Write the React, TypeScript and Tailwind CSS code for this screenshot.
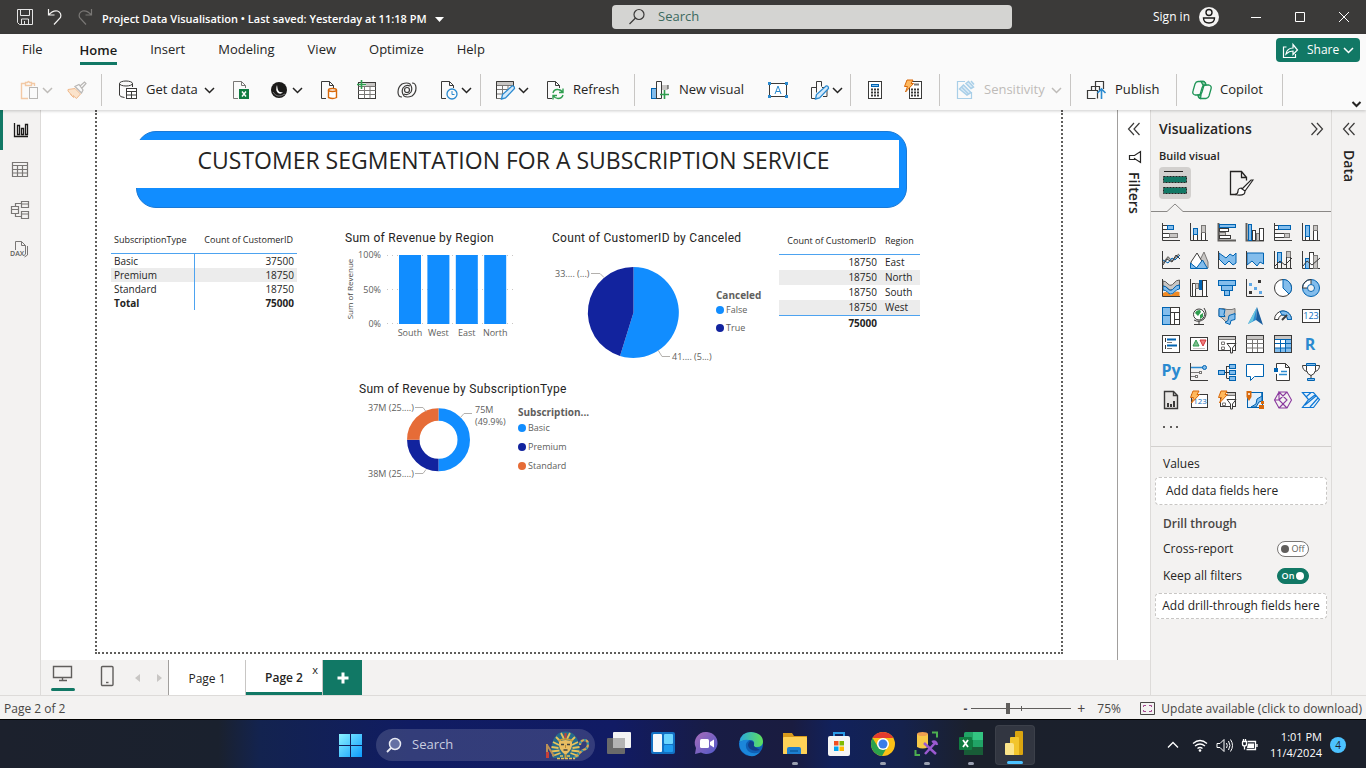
import type { ReactNode } from "react";

const INK = "#3b3a39";
const BLUE = "#83bdec";
const EDGE = "#0063b1";
const GREY = "#c8c6c4";
const MID = "#797775";

type BoxProps = { x: number; y: number; w: number; h: number; f?: string; s?: string };
const Box = ({ x, y, w, h, f = "#fff", s = INK }: BoxProps) => (
  <rect x={x} y={y} width={w} height={h} fill={f} stroke={s} />
);
const Line = ({ d, s = INK, w = 1, f = "none" }: { d: string; s?: string; w?: number; f?: string }) => (
  <path d={d} stroke={s} strokeWidth={w} fill={f} />
);
const Axis = () => <Line d="M.5 0V17.5H18" />;
const Bolt = () => <path d="M3 0h6L7 3.500h2.500L1.500 12 3.500 6.500H.5z" fill="#ffb95e" stroke="#d8690b" />;

function Glyph({ size = 20, box = size, children }: { size?: number; box?: number; children: ReactNode }) {
  return (
    <svg width={size} height={size} viewBox={`0 0 ${box} ${box}`} fill="none" aria-hidden="true" className="shrink-0 overflow-visible">
      {children}
    </svg>
  );
}

function Chevron({ tone = "#252423" }: { tone?: string }) {
  return (
    <svg width="11" height="7" viewBox="0 0 11 7" fill="none" aria-hidden="true" className="shrink-0">
      <path d="M1 1l4.500 4.500L10 1" stroke={tone} strokeWidth="1.500" />
    </svg>
  );
}

const Doc = ({ s = INK }: { s?: string }) => <path d="M7 18.500H2.500v-17h8l4 4V8M10.500 1.500v4h4" fill="none" stroke={s} />;

const tool = {
  paste: (
    <>
      <path d="M8 18.500H1.500v-15h4M11 3.500h3.500V6M5.500 5.500v-3h2q1-2 2 0h2v3z" stroke="#f3c9a5" strokeWidth="1.400" />
      <Box x={9.5} y={7.5} w={8} h={11} f="#fafafa" s="#b8b6b4" />
    </>
  ),
  brush: (
    <>
      <path d="M1 9.500l7-1 5.500 5.500-4 4.500-3.500-3 .5 2-3-3 1 .5-3.500-4z" fill="#fbe3cb" stroke="#f0b98c" />
      <path d="M8 6.500l6.500 6.500 1.500-3-4-5.500zM13 6l4.500-4 1.500 1.500L15 8" fill="#fafafa" stroke="#b8b6b4" strokeWidth="1.200" />
    </>
  ),
  getData: (
    <>
      <ellipse cx="8" cy="3.500" rx="6.500" ry="2.500" stroke={INK} />
      <path d="M1.500 3.500V15q0 2 5 2.500M14.500 3.500V7" stroke={INK} />
      <Box x={8.5} y={8.5} w={10} h={10} />
      <path d="M8.500 11.500h10M8.500 15h10M13.500 11.500v7" stroke={INK} />
    </>
  ),
  excel: (
    <>
      <Doc s={MID} />
      <rect x="8" y="9" width="10" height="10" fill="#107c41" />
      <path d="M11 11.500l4 5m0-5l-4 5" stroke="#fff" strokeWidth="1.400" />
    </>
  ),
  lake: (
    <>
      <circle cx="9" cy="10" r="8" fill="#1b1a19" />
      <path d="M7 5q-2 5 1 8 3 2 5-1-4 1-5-2-.6-2-1-5z" fill="#fff" />
      <path d="M3 12q4 7 12 2" stroke="#777" />
    </>
  ),
  sql: (
    <>
      <Doc />
      <path d="M9.500 10v7.500q4.500 2 8 0V10" fill="#fff" stroke="#d8690b" strokeWidth="1.400" />
      <ellipse cx="13.500" cy="10" rx="4" ry="1.500" fill="#fff" stroke="#d8690b" strokeWidth="1.400" />
    </>
  ),
  table: (
    <>
      <Box x={1.5} y={2.5} w={17} h={16} />
      <rect x="9" y="3" width="9" height="3" fill={GREY} />
      <path d="M1.500 6.500h17M1.500 10.500h17M1.500 14.500h17M7.500 6v12.500M13 6v12.500" stroke={MID} />
      <path d="M4.500 0v9M0 4.500h9" stroke="#2f9e4f" strokeWidth="1.600" />
    </>
  ),
  dataverse: (
    <g stroke={INK} strokeWidth="1.200">
      <circle cx="10" cy="10" r="2.500" />
      <path d="M15 3q4 0 4 5 0 5-4 8-5 2-8 0-3-4-1-8 3-4 7-2M5 17q-4 0-4-5 0-5 4-8 5-2 8 0 3 4 1 8-3 4-7 2" />
    </g>
  ),
  recent: (
    <>
      <Doc />
      <circle cx="13" cy="14" r="5" fill="#fafafa" stroke="#2a8ad0" strokeWidth="1.300" />
      <path d="M13 11v3.500h2.500" stroke="#2a8ad0" />
    </>
  ),
  transform: (
    <>
      <path d="M7 18.500H.5v-17h17V8M.5 5.500h17M.5 9.500h12M.5 14h8M6.500 5v10M12 5v6" stroke={MID} />
      <rect x="1" y="2" width="16" height="3" fill={GREY} />
      <path d="M.5 18.500v-17h17V8" stroke={INK} />
      <path d="M5.500 19l1-4.500L16 6q2.500-.5 2.500 2.500L9.500 18z" fill="#d5eafb" stroke="#2a8ad0" strokeWidth="1.300" />
    </>
  ),
  refresh: (
    <>
      <Doc />
      <rect x="7" y="9" width="12" height="10" fill="#fafafa" />
      <path d="M8 13q1-4 5-3.500 3 .2 4.500 2.500m.5-3.500V12.500h-4M18 15q-1 3.500-5 3.500-3 0-4.500-2.500M8 19.500v-4h4" stroke="#2f9e4f" strokeWidth="1.400" />
    </>
  ),
  visual: (
    <>
      <Box x={0.5} y={8.5} w={5} h={10} f={BLUE} s={EDGE} />
      <rect x="11" y="5" width="6" height="5" fill={GREY} />
      <path d="M5.500 18.500v-17h5v17zM17 5v4" stroke={INK} />
      <path d="M13.500 10v9M9 14.500h9" stroke="#2f9e4f" strokeWidth="1.600" />
    </>
  ),
  textBox: (
    <>
      <rect x="1.500" y="3.500" width="17" height="13" fill="#fff" stroke={INK} />
      <path d="M7 14l3-8 3 8M8 11.500h4" stroke="#2a8ad0" />
      <path d="M0 2h3v3H0zM17 2h3v3h-3zM0 15h3v3H0zM17 15h3v3h-3z" fill="#2a8ad0" />
    </>
  ),
  shapes: (
    <>
      <path d="M5.500 18.500H1.500v-11h5v5M6.500 12V1.500h5v5M12 7.500h5v9h-4" stroke={INK} />
      <path d="M5.500 19l1-4.500L16 6q2.500-.5 2.500 2.500L9.500 18z" fill="#d5eafb" stroke="#2a8ad0" strokeWidth="1.300" />
    </>
  ),
  calc: (
    <>
      <rect x="2.500" y="1.500" width="13" height="17" fill="#fff" stroke={INK} />
      <rect x="5.500" y="4.500" width="7" height="2" fill={BLUE} stroke={EDGE} />
      <path d="M5 9.500h8M5 12.500h8M5 15.500h8" stroke={INK} strokeWidth="2" strokeDasharray="2 1" />
    </>
  ),
  quick: (
    <>
      <rect x="5.500" y="1.500" width="12" height="17" fill="#fff" stroke={INK} />
      <path d="M10 4.500h5" stroke={MID} strokeWidth="2" />
      <path d="M7 9.500h8M7 12.500h8M7 15.500h8" stroke={INK} strokeWidth="2" strokeDasharray="2 1" />
      <Bolt />
    </>
  ),
  sensitivity: (
    <g stroke="#a9cfe8">
      <path d="M9 1.500H1.500v17h14V12" strokeWidth="1.200" />
      <path d="M3.500 9l4-4 7.500 7.500-4 2.500zM10 3.500l5 5 2.500-1.500-5-5.500zM15 1l3 3.500M5.500 7l7 7" strokeWidth="1.500" fill="#dcecf7" />
    </g>
  ),
  publish: (
    <>
      <path d="M8.500 18.500H.5v-8h4v-4h4M4.500 10.500h6v8M8.500 10v-8.500h8V9M8.500 6.500h4V10" stroke={INK} strokeWidth="1.200" />
      <path d="M14.500 19V9.500M10.500 13l4-4 4 4" stroke="#2a8ad0" strokeWidth="1.600" />
    </>
  ),
  copilot: (
    <g stroke="#1f9457" strokeWidth="1.300">
      <path d="M6 1.500h5q2 0 1.500 2L10 12q-1 3-3 3H3q-3-1-2-4l2-7q1-2.500 3-2.500z" />
      <path d="M14 18.500H9q-2 0-1.500-2L10 8q1-3 3-3h4q3 1 2 4l-2 7q-1 2.500-3 2.500z" />
      <path d="M9 1.500h3q2 1 2 3.500h-3zM6 15h3l-.5 3.500Q6 18 6 15z" fill="#8ccfa9" />
    </g>
  ),
};

type ToolProps = { icon: ReactNode; name: string; label?: string; arrow?: boolean; dim?: boolean; className?: string };
function Tool({ icon, name, label, arrow, dim, className = "" }: ToolProps) {
  return (
    <button aria-label={name} className={`flex h-9 items-center ${className} ${dim ? "text-[#bebbb8]" : ""}`}>
      <Glyph>{icon}</Glyph>
      {label && <span className="ml-2 mr-1 whitespace-nowrap">{label}</span>}
      {arrow && (
        <span className="ml-0.5">
          <Chevron tone={dim ? "#bebbb8" : undefined} />
        </span>
      )}
    </button>
  );
}

function Group({ className, children }: { className: string; children: ReactNode }) {
  return (
    <div className={`flex h-8 shrink-0 items-center border-r border-[#c8c6c4] ${className}`}>{children}</div>
  );
}

function TitleBar() {
  return (
    <header className="flex h-[34px] shrink-0 items-center bg-[#3b3a39] text-xs text-white">
      <div className="flex flex-[612] items-center">
        <button aria-label="Save" className="ml-4">
          <Glyph size={18}>
            <path d="M1.500 1.500h15v15h-13l-2-2zM4.500 2v5.500h9V2M5.500 16v-5h7v5M8.500 13v3" stroke="#e5e5e5" />
          </Glyph>
        </button>
        <button aria-label="Undo" className="ml-3">
          <Glyph size={18}>
            <path d="M2.500 1v6h6M2.500 7Q7 2 11.500 3q4.500 2 3 6.500L8 16.500" stroke="#f3f2f1" strokeWidth="1.200" />
          </Glyph>
        </button>
        <button aria-label="Redo" className="ml-3">
          <Glyph size={18}>
            <path d="M15.500 1v6h-6M15.500 7Q11 2 6.500 3 2 5 3.500 9.500l6.500 7" stroke="#797775" strokeWidth="1.200" />
          </Glyph>
        </button>
        <button className="ml-2 flex items-center gap-2 whitespace-nowrap pt-1 text-[11px] font-semibold">
          Project Data Visualisation • Last saved: Yesterday at 11:18 PM
          <svg width="9" height="5" viewBox="0 0 9 5" aria-hidden="true">
            <path d="M0 0h9L4.500 5z" fill="#fff" />
          </svg>
        </button>
      </div>
      <label className="flex h-6 w-[400px] items-center gap-3 rounded-sm bg-[#d4d4d2] pl-4">
        <Glyph size={18}>
          <circle cx="11" cy="6.500" r="5" stroke="#3b3a39" strokeWidth="1.200" />
          <path d="M7.500 10L1.500 16" stroke="#3b3a39" strokeWidth="1.200" />
        </Glyph>
        <input
          type="search"
          aria-label="Search"
          placeholder="Search"
          className="min-w-0 flex-1 bg-transparent text-[13px] outline-none placeholder:text-[#3c6a5f]"
        />
      </label>
      <div className="flex flex-[354] items-center justify-end">
        <button className="flex items-center gap-2">
          Sign in
          <Glyph size={22}>
            <circle cx="11" cy="11" r="10" fill="#f3f2f1" />
            <circle cx="11" cy="6.500" r="3" stroke="#1b1a19" strokeWidth="1.400" />
            <path d="M5.500 12h11q0 5-5.500 5t-5.500-5z" stroke="#1b1a19" strokeWidth="1.400" />
          </Glyph>
        </button>
        <button aria-label="Minimize" className="flex w-[42px] justify-end">
          <Glyph size={12}><path d="M1 6.500h10" stroke="#fff" /></Glyph>
        </button>
        <button aria-label="Maximize" className="flex w-11 justify-end">
          <Glyph size={12}><path d="M1.500 1.500h9v9h-9z" stroke="#fff" /></Glyph>
        </button>
        <button aria-label="Close" className="mr-4 flex w-11 justify-end">
          <Glyph size={12}><path d="M1 1l10 10M11 1L1 11" stroke="#fff" /></Glyph>
        </button>
      </div>
    </header>
  );
}

function Ribbon() {
  const menu = ["Insert", "Modeling", "View", "Optimize", "Help"];
  return (
    <div className="z-10 shrink-0 bg-[#fafafa] text-[13px] text-[#252423] shadow-[0_1px_3px_rgba(0,0,0,0.2)]">
      <nav className="flex h-8 items-center gap-[33px] pl-[22px] pr-1.5">
        <a href="#file" className="mr-1">File</a>
        <a href="#home" className="flex h-8 flex-col justify-end pb-px font-semibold text-[#1b1a19]">
          Home
          <span className="mt-0.5 h-[3px] bg-[#117865]" />
        </a>
        {menu.map((m) => (
          <a key={m} href={`#${m.toLowerCase()}`}>{m}</a>
        ))}
        <button className="ml-auto flex h-6 w-[84px] items-center gap-2 rounded bg-[#117865] pl-1.5 text-xs text-white">
          <Glyph size={17}>
            <path d="M4.500 5H1.500v10.500h12V12M4 12q1-6 7-6V2.500L15.500 8 11 12.500V9Q7 9 4 12z" stroke="#fff" strokeWidth="1.200" />
          </Glyph>
          <span className="flex items-center gap-1">Share <Chevron tone="#fff" /></span>
        </button>
      </nav>
      <div className="flex h-11 items-center pt-1">
        <Group className="w-[102px] pl-5">
          <Tool icon={tool.paste} name="Paste" arrow dim className="w-[47px]" />
          <Tool icon={tool.brush} name="Format painter" dim />
        </Group>
        <Group className="w-[379px] pl-4">
          <Tool icon={tool.getData} name="Get data" label="Get data" arrow className="w-[113px]" />
          <Tool icon={tool.excel} name="Excel workbook" className="w-[39px]" />
          <Tool icon={tool.lake} name="OneLake data hub" arrow className="w-[49px]" />
          <Tool icon={tool.sql} name="SQL Server" className="w-[38px]" />
          <Tool icon={tool.table} name="Enter data" className="w-10" />
          <Tool icon={tool.dataverse} name="Dataverse" className="w-[42px]" />
          <Tool icon={tool.recent} name="Recent sources" arrow />
        </Group>
        <Group className="w-[154px] pl-[15px]">
          <Tool icon={tool.transform} name="Transform data" arrow className="w-[49px]" />
          <Tool icon={tool.refresh} name="Refresh" label="Refresh" />
        </Group>
        <Group className="w-[216px] pl-4">
          <Tool icon={tool.visual} name="New visual" label="New visual" className="w-[117px]" />
          <Tool icon={tool.textBox} name="Text box" className="w-[42px]" />
          <Tool icon={tool.shapes} name="Shapes" arrow />
        </Group>
        <Group className="w-[89px] pl-[15px]">
          <Tool icon={tool.calc} name="New measure" className="w-[38px]" />
          <Tool icon={tool.quick} name="Quick measure" />
        </Group>
        <Group className="w-[131px] pl-4">
          <Tool icon={tool.sensitivity} name="Sensitivity" label="Sensitivity" arrow dim />
        </Group>
        <Group className="w-[106px] pl-4">
          <Tool icon={tool.publish} name="Publish" label="Publish" />
        </Group>
        <Group className="w-[106px] pl-[15px]">
          <Tool icon={tool.copilot} name="Copilot" label="Copilot" />
        </Group>
        <button aria-label="Collapse ribbon" className="ml-auto mr-1 self-end pb-0.5">
          <svg width="11" height="7" viewBox="0 0 11 7" fill="none" aria-hidden="true">
            <path d="M1.500 1l4 4 4-4" stroke="#252423" strokeWidth="2" />
          </svg>
        </button>
      </div>
    </div>
  );
}

function Rail() {
  return (
    <nav className="flex w-[41px] shrink-0 flex-col border-r border-[#dddbd9] bg-[#f3f2f1]">
      <button aria-label="Report view" className="flex h-10 items-center border-l-[3px] border-[#117865] pl-2.5">
        <Glyph size={16}>
          <path d="M1.500 1v13.500H15M4.500 12.500v-9h2v9zM8.500 12.500v-6h2v6zM12.500 12.500v-10h2v10z" stroke="#1b1a19" strokeWidth="1.300" />
        </Glyph>
      </button>
      <button aria-label="Table view" className="flex h-10 items-center justify-center">
        <Glyph size={18}>
          <path d="M1.500 1.500h15v14h-15zM1.500 4.500h15M1.500 8.500h15M1.500 12h15M6.500 4v11M11.500 4v11" stroke={MID} strokeWidth="1.200" />
        </Glyph>
      </button>
      <button aria-label="Model view" className="flex h-10 items-center justify-center">
        <Glyph>
          <path d="M1.500 6.500h7v7h-7zM1.500 9.500h7M11.500 1.500h7v6h-7zM11.500 4h7M11.500 11.500h7v7h-7zM11.500 14h7M5.500 6.500v-3h6M5.500 13.500v3h6" stroke={MID} strokeWidth="1.200" />
        </Glyph>
      </button>
      <button aria-label="DAX query view" className="flex h-10 items-center justify-center">
        <Glyph>
          <path d="M5.500 10V1.500h6l4 4V14l-2 2M11.500 1.500v4h4M17.500 6v9l-3 2" stroke={MID} />
          <text x="0" y="16" fontSize="7" className="fill-[#605e5c] font-semibold">DAX</text>
        </Glyph>
      </button>
    </nav>
  );
}

function CountTable() {
  const rows = [["Basic", "37500"], ["Premium", "18750"], ["Standard", "18750"]];
  return (
    <table className="absolute left-[14px] top-[118px] w-[186px] table-fixed border-collapse text-[10px] leading-[14px] text-[#252423]">
      <thead className="text-[9px]">
        <tr className="h-[25px] border-b border-[#4da3f0]">
          <th className="w-[83px] whitespace-nowrap p-0 pl-[3px] text-left font-normal">SubscriptionType</th>
          <th className="whitespace-nowrap p-0 pr-1 text-right font-normal">Count of CustomerID</th>
        </tr>
      </thead>
      <tbody>
        {rows.map(([k, v], i) => (
          <tr key={k} className={i === 1 ? "bg-[#ececec]" : ""}>
            <td className="border-r border-[#4da3f0] p-0 pl-[3px]">{k}</td>
            <td className="p-0 pr-[3px] text-right">{v}</td>
          </tr>
        ))}
      </tbody>
      <tfoot className="font-bold">
        <tr>
          <td className="border-r border-[#4da3f0] p-0 pl-[3px]">Total</td>
          <td className="p-0 pr-[3px] text-right">75000</td>
        </tr>
      </tfoot>
    </table>
  );
}

function RegionTable() {
  const rows = ["East", "North", "South", "West"];
  return (
    <table className="absolute left-[682px] top-[118px] w-[141px] table-fixed border-collapse text-[10px] leading-[15px] text-[#252423]">
      <thead className="text-[9px]">
        <tr className="h-[26px] border-b border-[#4da3f0]">
          <th className="w-[100px] whitespace-nowrap p-0 pr-[3px] text-right font-normal">Count of CustomerID</th>
          <th className="p-0 pl-1.5 text-left font-normal">Region</th>
        </tr>
      </thead>
      <tbody>
        {rows.map((r, i) => (
          <tr key={r} className={i % 2 ? "bg-[#ececec]" : ""}>
            <td className="p-0 pr-0.5 text-right">18750</td>
            <td className="p-0 pl-1.5">{r}</td>
          </tr>
        ))}
      </tbody>
      <tfoot className="border-t border-[#4da3f0] font-bold">
        <tr>
          <td className="p-0 pr-0.5 text-right">75000</td>
          <td />
        </tr>
      </tfoot>
    </table>
  );
}

const visualTitle = "whitespace-nowrap font-['Roboto',sans-serif] text-xs leading-4 tracking-wide text-[#252423]";

function RevenueByRegion() {
  const bars = ["South", "West", "East", "North"];
  return (
    <section className="absolute left-[248px] top-[120px]">
      <h2 className={visualTitle}>Sum of Revenue by Region</h2>
      <svg width="176" height="96" viewBox="0 0 176 96" className="overflow-visible fill-[#605e5c] text-[9px]">
        {["100%", "50%", "0%"].map((t, i) => (
          <g key={t}>
            <text x="36" y={12 + i * 34.5} textAnchor="end">{t}</text>
            <path d={`M42 ${9.5 + i * 34}H172`} stroke="#c8c6c4" strokeDasharray="1 4" />
          </g>
        ))}
        {bars.map((b, i) => (
          <g key={b}>
            <rect x={54 + i * 28.4} y="9" width="22" height="69" fill="#118dff" />
            <text x={65 + i * 28.4} y="90" textAnchor="middle">{b}</text>
          </g>
        ))}
        <text x="8" y="43" textAnchor="middle" transform="rotate(-90 8 43)" className="fill-[#484644] text-[8px]">Sum of Revenue</text>
      </svg>
    </section>
  );
}

type LegendProps = { title: string; items: [string, string][]; className: string };
function Legend({ title, items, className }: LegendProps) {
  return (
    <div className={`absolute text-[#605e5c] ${className}`}>
      <p className="text-[10px] font-bold leading-3">{title}</p>
      <ul className="flex flex-col text-[9px]">
        {items.map(([name, color]) => (
          <li key={name} className="flex items-center gap-0.5">
            <svg width="8" height="8" viewBox="0 0 8 8" aria-hidden="true"><circle cx="4" cy="4" r="4" fill={color} /></svg>
            {name}
          </li>
        ))}
      </ul>
    </div>
  );
}

function CanceledPie() {
  return (
    <section className="absolute left-[455px] top-[120px]">
      <h2 className={visualTitle}>Count of CustomerID by Canceled</h2>
      <svg width="162" height="120" viewBox="0 0 162 120" className="fill-[#605e5c] text-[9px]">
        <path d="M81.500 66.500V21A45.500 45.500 0 1 1 68 110z" fill="#118dff" />
        <path d="M81.500 66.500L68 110A45.500 45.500 0 0 1 81.500 21z" fill="#12239e" />
        <path d="M39 27.500h9l4 4M106 104l4 6.500h8" fill="none" stroke="#b3b0ad" />
        <text x="3" y="31">33.... (...)</text>
        <text x="120" y="114">41.... (5...)</text>
      </svg>
      <Legend title="Canceled" className="left-[164px] top-[59px] leading-[18px]" items={[["False", "#118dff"], ["True", "#12239e"]]} />
    </section>
  );
}

function TypeDonut() {
  return (
    <section className="absolute left-[262px] top-[271px]">
      <h2 className={visualTitle}>Sum of Revenue by SubscriptionType</h2>
      <svg width="150" height="90" viewBox="0 0 150 90" className="fill-[#605e5c] text-[9px]">
        <g fill="none" strokeWidth="12.500">
          <path d="M79.500 17.500a25.200 25.200 0 0 1 0 50.500" stroke="#118dff" />
          <path d="M79.500 68a25.200 25.200 0 0 1-25.200-25.200" stroke="#12239e" />
          <path d="M54.300 42.800a25.200 25.200 0 0 1 25.200-25.300" stroke="#e66c37" />
        </g>
        <path d="M56 10.500h8l3 4M56 76.500h8l3-4M101 21l4-4.500h8" fill="none" stroke="#b3b0ad" />
        <text x="9" y="14">37M (25....)</text>
        <text x="9" y="80">38M (25....)</text>
        <text x="116" y="16">75M</text>
        <text x="116" y="28">(49.9%)</text>
      </svg>
      <Legend
        title="Subscription..."
        className="left-[159px] top-[25px] leading-[19px]"
        items={[["Basic", "#118dff"], ["Premium", "#12239e"], ["Standard", "#e66c37"]]}
      />
    </section>
  );
}

function Report() {
  return (
    <main className="min-w-0 flex-1 overflow-hidden bg-white">
      <div className="relative ml-[54px] h-[544px] w-[968px] border-2 border-t-0 border-dotted border-[#605e5c]">
        <div className="absolute left-[39px] top-[21px] h-[77px] w-[771px] rounded-[20px] border border-[#1a79d6] bg-[#118dff]" />
        <h1 className="absolute left-[39px] top-[30px] flex h-12 w-[763px] items-center justify-center whitespace-nowrap bg-white pb-2 pr-2 text-[23px] text-[#252423]">
          CUSTOMER SEGMENTATION FOR A SUBSCRIPTION SERVICE
        </h1>
        <CountTable />
        <RevenueByRegion />
        <CanceledPie />
        <RegionTable />
        <TypeDonut />
      </div>
    </main>
  );
}

const visuals: [string, ReactNode][] = [
  ["Stacked bar chart", <><Axis /><Box x={0.5} y={2.5} w={5} h={4} /><Box x={5.5} y={2.5} w={6} h={4} f={BLUE} s={EDGE} /><Box x={0.5} y={10.5} w={7} h={4} /><Box x={7.5} y={10.5} w={8} h={4} f={GREY} s={MID} /></>],
  ["Stacked column chart", <><Axis /><Box x={3.5} y={11.5} w={4} h={6} /><Box x={3.5} y={5.5} w={4} h={6} f={BLUE} s={EDGE} /><Box x={11.5} y={9.5} w={4} h={8} /><Box x={11.5} y={2.5} w={4} h={7} f={GREY} s={MID} /></>],
  ["Clustered bar chart", <><Line d="M.5 0V17.500H18" w={2} s="#605e5c" /><Box x={1.5} y={1.5} w={16} h={3} f={BLUE} s={EDGE} /><Box x={1.5} y={5.5} w={9} h={3} /><Box x={1.5} y={9.5} w={6} h={3} f={GREY} s={MID} /><Box x={1.5} y={12.5} w={11} h={3} /></>],
  ["Clustered column chart", <><Line d="M.5 0V17.500H18" w={2} s="#605e5c" /><Box x={2.5} y={1.5} w={3} h={16} f={BLUE} s={EDGE} /><Box x={6.5} y={7.5} w={3} h={10} /><Box x={10.5} y={10.5} w={3} h={7} f={GREY} s={MID} /><Box x={13.5} y={5.5} w={4} h={12} /></>],
  ["100% stacked bar chart", <><Axis /><Box x={0.5} y={2.5} w={4} h={4} /><Box x={4.5} y={2.5} w={12} h={4} f={BLUE} s={EDGE} /><Box x={0.5} y={10.5} w={10} h={4} /><Box x={10.5} y={10.5} w={5} h={4} f={GREY} s={MID} /></>],
  ["100% stacked column chart", <><Axis /><Box x={3.5} y={13.5} w={4} h={4} /><Box x={3.5} y={2.5} w={4} h={11} f={BLUE} s={EDGE} /><Box x={11.5} y={7.5} w={4} h={10} /><Box x={11.5} y={2.5} w={4} h={5} f={GREY} s={MID} /></>],
  ["Line chart", <><Axis /><Line d="M1 12l5-6 4 4 7-7" s={MID} w={1.3} /><Line d="M1 9l5 3 4-5 3 2 5-5" s={EDGE} /><Line d="M1 14l4-6 5 3 4-7 4 4" /></>],
  ["Area chart", <><path d="M14 1l4 10v6H6z" fill={GREY} stroke={MID} /><path d="M1 11l6-9 6 10-5 5H1z" fill="#fff" stroke={INK} /><path d="M.5 12l6 5 6-8 5 8.500H.5z" fill={BLUE} stroke={EDGE} /></>],
  ["Stacked area chart", <><path d="M1 8l6 6 4-4 4 4 3-2V2l-3 3-3-2-4 4-7-5z" fill={BLUE} stroke={EDGE} /><Axis /></>],
  ["100% stacked area chart", <><path d="M1 2h16.500v11L14 11l-3 4-5-5-5 4z" fill={BLUE} stroke={EDGE} /><Axis /></>],
  ["Line and stacked column chart", <><Axis /><Box x={3.5} y={1.5} w={4} h={10} f={BLUE} s={EDGE} /><Box x={12.5} y={0.5} w={4} h={6} f={GREY} s={MID} /><Line d="M3.500 11v6M7.500 11v6M12.500 6v11M16.500 6v11M1 15l5-5 5 4 7-7" /></>],
  ["Line and clustered column chart", <><Axis /><Box x={3.5} y={7.5} w={4} h={10} f={BLUE} s={EDGE} /><Box x={7.5} y={1.5} w={4} h={16} /><Box x={11.5} y={4.5} w={4} h={13} f={GREY} s={MID} /><Line d="M1 15l4-5 5 4 8-7" /></>],
  ["Ribbon chart", <><path d="M1 14q4-3 8 2 4-5 8.500-3v4H1z" fill="#f08a24" /><path d="M1 2q3 0 5 3 3 3 6-1 2-3 5.500-3v5q-3 0-5 3-4 4-7 0-2-2-4.500-2z" fill={GREY} stroke="#605e5c" /><path d="M1 7q3 0 5 3 3 3 6-1 2-3 5.500-3v4q-3 0-5 3-4 4-7 0-2-2-4.500-2z" fill={BLUE} stroke={EDGE} /><Axis /></>],
  ["Waterfall chart", <><Axis /><Box x={2.5} y={4.5} w={3} h={13} /><Box x={5.5} y={4.5} w={3} h={5} f={GREY} s={MID} /><Box x={9.5} y={1.5} w={2} h={9} f={EDGE} s={EDGE} /><Box x={12.5} y={1.5} w={4} h={16} /></>],
  ["Funnel chart", <><Box x={0.5} y={1.5} w={17} h={5} f={BLUE} s={EDGE} /><Box x={3.5} y={6.5} w={11} h={5} f={BLUE} s={EDGE} /><Box x={6.5} y={11.5} w={5} h={5} f={BLUE} s={EDGE} /></>],
  ["Scatter chart", <><Axis /><path d="M12 1h3v3h-3zM3 12h3v3H3z" fill={INK} /><path d="M3 4h3v3H3zM8 8h3v3H8zM13 12h3v3h-3z" fill="#5fa8e6" /></>],
  ["Pie chart", <><circle cx="9" cy="9" r="8.500" fill="#fff" stroke={INK} /><path d="M9 .5A8.500 8.500 0 0 1 15 15L9 9z" fill={BLUE} stroke={EDGE} /></>],
  ["Donut chart", <><circle cx="9" cy="9" r="6" stroke={BLUE} strokeWidth="5" /><path d="M3 9A6 6 0 0 1 9 3" stroke="#fff" strokeWidth="5" /><circle cx="9" cy="9" r="8.500" stroke={EDGE} /><circle cx="9" cy="9" r="3.500" stroke={EDGE} fill="#f3f2f1" /><path d="M.5 9H5M9 .5V5M.5 9A8.500 8.500 0 0 1 9 .5" stroke={INK} /></>],
  ["Treemap", <><Box x={0.5} y={0.5} w={8} h={8} f={BLUE} s={EDGE} /><Box x={0.5} y={8.5} w={8} h={9} f={BLUE} s={EDGE} /><Box x={8.5} y={0.5} w={9} h={5} /><Box x={8.5} y={5.5} w={4} h={12} /><Box x={12.5} y={5.5} w={5} h={7} /><Box x={12.5} y={12.5} w={5} h={5} /></>],
  ["Map", <><circle cx="9" cy="7.500" r="5.500" fill="#fff" stroke={INK} /><path d="M5 6q1-3 5-3l1 2-3 4zM10 8l3-2v4l-3 2z" fill="#2f9e4f" /><path d="M14 1q4 6 0 11-5 4-10 1M9 14v3M4 17.500h10" stroke={INK} /></>],
  ["Filled map", <><path d="M1 2.500q4-2 8 0l5 0 3-1v6l-3 5-5 3.500-5-5-3-2z" fill={GREY} stroke={MID} /><path d="M1 1.500l6 1-1 5 1 2H1zM11 8.500l6-2v6l-4 1-1 4-5-2 3-2z" fill={BLUE} stroke={EDGE} /></>],
  ["Azure map", <><path d="M11 0L2 17l8-4z" fill="#2a8ad0" /><path d="M11 0l6 18-7-5z" fill="#1b5e9e" /><path d="M11 0L2 17l5-3z" fill="#6cc7de" /></>],
  ["Gauge", <><path d="M.5 12.500a8.500 8.500 0 0 1 17 0h-4a4.500 4.500 0 0 0-9 0z" fill="#fff" stroke={INK} /><path d="M6 4.500a8.500 8.500 0 0 1 11.500 8h-4A4.500 4.500 0 0 0 8 8z" fill={BLUE} stroke={EDGE} /><path d="M8 13l5-5" stroke={INK} strokeWidth="2" /></>],
  ["Card", <><Box x={0.5} y={2.5} w={17} h={13} /><text x="9" y="12" textAnchor="middle" fontSize="9" className="fill-[#0f6cbd]">123</text></>],
  ["Multi-row card", <><Box x={0.5} y={0.5} w={17} h={17} /><Line d="M3.500 3v4M3.500 10v4" /><Line d="M5 4.500h9M5 10.500h10" s={EDGE} w={2} /><Line d="M5 7.500h5M5 13.500h5" s={MID} /></>],
  ["KPI", <><Box x={0.5} y={2.5} w={17} h={13} /><path d="M3 11l3-6 3 6z" fill="#7fba8f" stroke="#2f9e4f" /><path d="M10 5h6l-3 6z" fill="#f08080" stroke="#d13438" /><Line d="M3 13.500h12" s={GREY} /></>],
  ["Slicer", <><Box x={0.5} y={1.5} w={17} h={14} /><rect x="1" y="2" width="16" height="2" fill={GREY} /><Line d="M.5 4.500h17M3.500 7h3v2.500h-3zM3.500 12h3v2.500h-3z" s={MID} /><path d="M9 8.500h9l-3.500 4.500v5h-2v-5z" fill="#fff" stroke={INK} /></>],
  ["Table", <><Box x={0.5} y={0.5} w={17} h={17} /><rect x="1" y="1" width="16" height="3" fill={GREY} /><Line d="M.5 4.500h17M.5 8.500h17M.5 13h17M6.500 4v13M11.500 4v13" s={MID} /></>],
  ["Matrix", <><Box x={0.5} y={0.5} w={17} h={17} /><rect x="1" y="1" width="16" height="3" fill={GREY} /><path d="M12 5h5v12H1v-4h11z" fill={BLUE} /><Line d="M.5 4.500h17M.5 8.500h17M.5 13h17M6.500 4v13M11.500 4v13" s={EDGE} /><Line d="M.5.5h17v17H.5z" /></>],
  ["R script visual", <text x="8" y="15" textAnchor="middle" fontSize="16" className="fill-[#2a8ad0] font-bold">R</text>],
  ["Python visual", <text x="9" y="13" textAnchor="middle" fontSize="16" className="fill-[#2a8ad0] font-bold">Py</text>],
  ["Key influencers", <><Line d="M1 9.500h9M1 13.500h4" s={MID} /><Axis /><Line d="M1 4.500h12" s="#2a8ad0" w={1.5} /><circle cx="14.500" cy="4.500" r="2" fill={BLUE} stroke={EDGE} /><Box x={9.5} y={8.5} w={2} h={2} s={MID} /><Box x={5.5} y={12.5} w={2} h={2} s={MID} /></>],
  ["Decomposition tree", <><Line d="M6 9.500h6M8.500 3v12M8.500 3.500h3M8.500 15.500h3" /><Box x={0.5} y={7.5} w={6} h={4} f={BLUE} s={EDGE} /><Box x={11.5} y={1.5} w={6} h={4} f={BLUE} s={EDGE} /><Box x={11.5} y={7.5} w={6} h={4} f={BLUE} s={EDGE} /><Box x={11.5} y={13.5} w={6} h={4} f={BLUE} s={EDGE} /></>],
  ["Q&A", <path d="M.5 1.500h17v12H8.500l-4 4v-4h-4z" fill="#fff" stroke={EDGE} />],
  ["Smart narrative", <><path d="M2.500 5V.5h9l4 4v13h-13V11M11.500.5v4h4" fill="#fff" stroke={INK} /><Box x={0.5} y={5.5} w={3} h={3} f={EDGE} s={EDGE} /><Line d="M7 8.500h6M5 11.500h8" s="#2a8ad0" w={1.4} /></>],
  ["Metrics", <><path d="M4.500 1.500h9v6q-1 4-4.500 5-3.500-1-4.500-5zM4.500 2.500h-4q0 5 4.500 6M13.500 2.500h4q0 5-4.500 6M9 12v3" fill="#fff" stroke={INK} /><path d="M4.500.5h9v2h-9zM5.500 15.500h7v2h-7z" fill={BLUE} stroke={EDGE} /></>],
  ["Paginated report", <><path d="M2.500.5h9l4 4v13h-13zM11.500.5v4h4" fill="#e8e6e4" stroke={INK} strokeWidth="1.400" /><path d="M5 12h2v4H5zM8 13h2v3H8zM11 10h2v6h-2z" fill={INK} /></>],
  ["New card", <><Box x={1.5} y={3.5} w={16} h={13} /><text x="10" y="13" textAnchor="middle" fontSize="8" className="fill-[#0f6cbd]">123</text><Bolt /></>],
  ["New slicer", <><Box x={2.5} y={1.5} w={15} h={14} /><rect x="9" y="2" width="8" height="2" fill={GREY} /><Line d="M8 4.500h9M4.500 12h3v2.500h-3z" s={MID} /><path d="M9 8.500h9l-3.500 4.500v5h-2v-5z" fill="#fff" stroke={INK} /><Bolt /></>],
  ["ArcGIS map", <><Box x={1.5} y={1.5} w={15} h={15} f="#e5f1fb" s={EDGE} /><path d="M16 2v3l-5 3-1 5-5 3h5l3-5 3-1z" fill={BLUE} stroke={EDGE} /><path d="M.5 0h5v6L3 10 .5 6zM15 10h3v3h-3zM13 14h5v4h-5z" fill="#d8690b" /><circle cx="3" cy="3" r="1" fill="#fff" /></>],
  ["Power Apps", <path d="M5 1h8l4.500 8L13 17H5L.5 9zM5 1l8 8-4 4-4-4zM13 1L5 9M5 9H.5M9 13l-4 4M9 13l4 4" stroke="#8b3a9e" strokeWidth="1.100" />],
  ["Power Automate", <path d="M.5 1.500h11l6 7-6 8H.5l6-8zM4 6L9 1.500M6.500 9l7-5.500M3 14l11-9M8 16l8-9" stroke="#0f78d4" strokeWidth="1.200" fill="#e8f3fc" />],
];

function Toggle({ label, on }: { label: string; on?: boolean }) {
  return (
    <label className="flex h-[27px] items-center justify-between">
      {label}
      <span className="grid h-4 w-8 place-items-center text-[9px] leading-none">
        <input
          type="checkbox"
          role="switch"
          defaultChecked={on}
          className="col-start-1 row-start-1 h-4 w-8 appearance-none rounded-full border border-[#797775] bg-white checked:border-[#117865] checked:bg-[#117865]"
        />
        <span className={`pointer-events-none z-10 col-start-1 row-start-1 flex items-center gap-0.5 ${on ? "flex-row-reverse font-semibold text-white" : "text-[#605e5c]"}`}>
          <span className={`size-2 rounded-full ${on ? "bg-white" : "bg-[#605e5c]"}`} />
          {on ? "On" : "Off"}
        </span>
      </span>
    </label>
  );
}

function DoubleChevron({ right }: { right?: boolean }) {
  return (
    <Glyph size={14}>
      <path d={right ? "M1.500 1l5.500 6-5.500 6M7 1l5.500 6L7 13" : "M7 1L1.500 7 7 13M12.500 1L7 7l5.500 6"} stroke="#3b3a39" strokeWidth="1.200" />
    </Glyph>
  );
}

function VisualPane() {
  return (
    <aside className="w-[182px] shrink-0 border-x border-[#dddbd9] bg-[#f3f2f1] text-xs text-[#252423]">
      <div className="flex h-9 items-center justify-between pl-2 pr-[7px] pt-0.5">
        <h2 className="text-[14px] font-semibold">Visualizations</h2>
        <button aria-label="Collapse pane"><DoubleChevron right /></button>
      </div>
      <h3 className="h-[21px] pl-2 text-[11px] font-semibold leading-5">Build visual</h3>
      <div className="flex gap-[34px] pl-2">
        <button aria-label="Build visual" className="flex size-8 items-center justify-center rounded-sm bg-[#d2d0ce]">
          <Glyph size={26}>
            <path d="M2 1.500h19" stroke="#252423" />
            <path d="M1.500 6.500h23v6h-23zM1.500 17.500h23v6h-23z" fill="#117865" stroke="#252423" strokeDasharray="2 1" />
          </Glyph>
        </button>
        <button aria-label="Format visual" className="flex size-8 items-center justify-center">
          <Glyph size={26}>
            <path d="M8 24.500H2.500V1.500h11l5 6M13.500 1.500v6h5v3" stroke="#252423" strokeWidth="1.300" />
            <path d="M25 10l-8 11-3-2 9-9zM14 18q-4 0-4 3 0 3-3 3.500 6 1.500 9-.5 1-1 1-3" fill="#fff" stroke="#252423" strokeWidth="1.200" />
          </Glyph>
        </button>
      </div>
      <div className="mt-1 flex h-[9px]">
        <span className="w-4 border-b border-[#8a8886]" />
        <svg width="16" height="9" viewBox="0 0 16 9" fill="none" aria-hidden="true">
          <path d="M0 8.500L8 1l8 7.500" stroke="#8a8886" />
        </svg>
        <span className="flex-1 border-b border-[#8a8886]" />
      </div>
      <div className="grid w-fit grid-cols-6 gap-2.5 pl-[11px] pt-[11px]">
        {visuals.map(([name, art]) => (
          <button key={name} aria-label={name} className="size-[18px]">
            <Glyph size={18}>{art}</Glyph>
          </button>
        ))}
      </div>
      <button aria-label="More visuals" className="ml-3 mt-2.5 flex h-[27px] items-start pt-1">
        <Glyph size={16}>
          <path d="M0 3h2v2H0zM7 3h2v2H7zM13 3h2v2h-2z" fill="#605e5c" />
        </Glyph>
      </button>
      <section className="border-t border-[#d2d0ce] px-1 pt-[7px]">
        <h3 className="h-[23px] pl-2 leading-5">Values</h3>
        <div className="flex h-7 items-center rounded-sm border border-dashed border-[#c8c6c4] bg-white pl-2.5">Add data fields here</div>
        <h3 className="mt-2 pl-2 font-semibold leading-[22px] text-[#484644]">Drill through</h3>
        <div className="pl-2 pr-[18px]">
          <Toggle label="Cross-report" />
          <Toggle label="Keep all filters" on />
        </div>
        <div className="mt-1 flex h-[26px] items-center justify-center whitespace-nowrap rounded-sm border border-dashed border-[#c8c6c4] bg-white">
          Add drill-through fields here
        </div>
      </section>
    </aside>
  );
}

function PageTabs() {
  return (
    <nav className="flex h-[35px] shrink-0 bg-[#f3f2f1] text-xs text-[#252423]">
      <button aria-label="Desktop layout" className="ml-[10px] flex w-6 flex-col items-center justify-end pb-1">
        <Glyph size={20}>
          <path d="M.5 2.500h18v11H.5zM9.500 14v2M6 16.500h8" stroke="#605e5c" strokeWidth="1.400" />
        </Glyph>
        <span className="mt-1 h-[3px] w-6 rounded bg-[#117865]" />
      </button>
      <button aria-label="Mobile layout" className="ml-6 flex w-4 items-center pb-1">
        <Glyph size={20}>
          <rect x="2.500" y="0.500" width="11.500" height="19" rx="1" stroke="#605e5c" strokeWidth="1.400" />
          <path d="M7 16.500h2.500" stroke="#605e5c" strokeWidth="1.400" />
        </Glyph>
      </button>
      <div className="ml-5 flex w-[33px] items-center justify-between pr-1.5">
        {["M5 0v8L0 4z", "M0 0v8l5-4z"].map((d, i) => (
          <button key={d} aria-label={i ? "Next page" : "Previous page"}>
            <svg width="5" height="8" viewBox="0 0 5 8" aria-hidden="true"><path d={d} fill="#c8c6c4" /></svg>
          </button>
        ))}
      </div>
      <button className="w-[77px] border-l border-[#a19f9d] bg-white pt-0.5">Page 1</button>
      <div className="grid w-[78px] grid-cols-1 border-x border-[#c8c6c4] bg-white">
        <button className="col-start-1 row-start-1 border-b-[3px] border-[#117865] pt-1 font-semibold">Page 2</button>
        <button aria-label="Delete page" className="col-start-1 row-start-1 mr-1 mt-0.5 self-start justify-self-end text-[11px] leading-4">x</button>
      </div>
      <button aria-label="New page" className="flex w-[39px] items-center justify-center bg-[#117865]">
        <Glyph size={12}><path d="M6 .5v11M.5 6h11" stroke="#fff" strokeWidth="3" /></Glyph>
      </button>
    </nav>
  );
}

function StatusBar() {
  return (
    <footer className="flex h-6 shrink-0 items-center border-t border-[#dddbd9] bg-[#f3f2f1] pl-1 pr-1 pt-0.5 text-xs text-[#484644]">
      <span>Page 2 of 2</span>
      <button aria-label="Zoom out" className="ml-auto mr-1 font-bold">-</button>
      <span className="grid w-[100px] items-center">
        <span className="col-start-1 row-start-1 ml-[50px] h-[5px] w-px bg-[#605e5c]" />
        <input
          type="range"
          aria-label="Zoom"
          min="10"
          max="190"
          defaultValue="75"
          className="col-start-1 row-start-1 h-px w-full appearance-none bg-[#605e5c] [&::-webkit-slider-thumb]:h-[11px] [&::-webkit-slider-thumb]:w-1 [&::-webkit-slider-thumb]:appearance-none [&::-webkit-slider-thumb]:bg-[#605e5c]"
        />
      </span>
      <button aria-label="Zoom in" className="ml-1.5 text-sm leading-none">+</button>
      <span className="ml-3 w-[43px]">75%</span>
      <button aria-label="Fit to page" className="mr-1.5">
        <Glyph size={15}>
          <path d="M.5 1.500h14v12H.5z" stroke="#484644" />
          <path d="M3.500 6V4.500H6M9 4.500h2.500V6M3.500 9v1.500H6M9 10.500h2.500V9" stroke="#a4468f" />
        </Glyph>
      </button>
      <a href="#update" className="whitespace-nowrap">Update available (click to download)</a>
    </footer>
  );
}

const app = {
  windows: (
    <>
      <defs>
        <linearGradient id="win" x1="0" y1="0" x2="1" y2="1"><stop stopColor="#8cf3ff" /><stop offset="1" stopColor="#0c9bff" /></linearGradient>
      </defs>
      <path d="M2 2h11v11H2zM14 2h11v11H14zM2 14h11v11H2zM14 14h11v11H14z" fill="url(#win)" />
    </>
  ),
  task: (
    <>
      <rect x="8" y="2" width="18" height="16" rx="1" fill="#f3f3f3" />
      <rect x="2" y="8" width="18" height="16" rx="1" fill="#6a6a6a" />
      <rect x="8" y="8" width="12" height="10" fill="#b4b4b4" />
    </>
  ),
  widgets: (
    <>
      <rect x="2" y="2" width="24" height="22" rx="2" fill="#1271c4" />
      <rect x="4" y="4" width="9" height="18" rx="1" fill="#f5f8fb" />
      <rect x="15" y="4" width="9" height="10" rx="1" fill="#6bd5ff" />
      <rect x="15" y="15" width="9" height="7" rx="1" fill="#1f9cf0" />
    </>
  ),
  chat: (
    <>
      <defs>
        <linearGradient id="chat" x1="0" y1="0" x2="1" y2="1"><stop stopColor="#a86cb8" /><stop offset="1" stopColor="#5059c9" /></linearGradient>
      </defs>
      <path d="M14 2a11 11 0 1 1-6 20.500L2 24l1-6A11 11 0 0 1 14 2z" fill="url(#chat)" />
      <rect x="7" y="9" width="9" height="9" rx="1.500" fill="#fff" />
      <path d="M17 12l4-2.500v8L17 15z" fill="#fff" />
    </>
  ),
  edge: (
    <>
      <defs>
        <linearGradient id="edg" x1="0" y1="0" x2="1" y2="0"><stop stopColor="#2aa7e0" /><stop offset="1" stopColor="#5fe05a" /></linearGradient>
      </defs>
      <circle cx="14" cy="14" r="12" fill="#0f5fb5" />
      <path d="M2.500 12Q4 2 14 2q12 1 12 10-.5 5-6 5-4 0-3-2 1-5-4-5-7 0-10.500 2z" fill="url(#edg)" />
      <path d="M12 10q-6 5-1 11 5 4 12 1-4 5-10 4Q2 23 2.200 13 6 9 12 10z" fill="#1b86da" />
      <path d="M13 11q-4 4 0 8 4 3 10 1l-5-3q-2-1-1-3 0-3-4-3z" fill="#123d8a" />
    </>
  ),
  folder: (
    <>
      <path d="M2 3h9l2 3h13v18H2z" fill="#d99a1c" />
      <rect x="2" y="7" width="24" height="17" rx="1" fill="#ffd257" />
      <path d="M6 24v-5q0-2 2-2h10q2 0 2 2v5z" fill="#1d7fd0" />
      <path d="M9 21h8" stroke="#0e5ca0" strokeWidth="1.500" />
    </>
  ),
  store: (
    <>
      <path d="M9 7V3h10v4" stroke="#2a9be6" strokeWidth="2" />
      <rect x="3" y="6" width="22" height="20" rx="2" fill="#f5f5f5" />
      <path d="M9 11h4.500v4.500H9z" fill="#f25022" /><path d="M14.500 11H19v4.500h-4.500z" fill="#7fba00" />
      <path d="M9 16.500h4.500V21H9z" fill="#00a4ef" /><path d="M14.500 16.500H19V21h-4.500z" fill="#ffb900" />
    </>
  ),
  chrome: (
    <>
      <circle cx="14" cy="14" r="12" fill="#fbc116" />
      <path d="M3.600 8a12 12 0 0 1 20.800 0H14z" fill="#e33b2e" />
      <path d="M3.600 8A12 12 0 0 0 13 26l5.500-9.500L9 17z" fill="#2ba24c" />
      <circle cx="14" cy="14" r="6" fill="#fff" /><circle cx="14" cy="14" r="4.500" fill="#3a7ce8" />
    </>
  ),
  ssms: (
    <>
      <path d="M4 4v13q6 3 11 0V4z" fill="#f7c948" /><ellipse cx="9.500" cy="4" rx="5.500" ry="2" fill="#f0a050" />
      <path d="M19 2.500h5v5M7 25H2.500v-5" stroke="#4caf50" strokeWidth="2" />
      <path d="M11 13l12 11M12 24l10-11M19 12q4-2 5 3" stroke="#9b59d0" strokeWidth="2.500" />
    </>
  ),
  excel: (
    <>
      <rect x="7" y="2" width="19" height="23" rx="1.500" fill="#21a366" />
      <path d="M16 2h10v8H16z" fill="#33c481" /><path d="M7 17h19v8H7z" fill="#185c37" /><path d="M7 10h9v7H7z" fill="#107c41" />
      <rect x="2" y="7" width="13" height="13" rx="1" fill="#107c41" />
      <path d="M6 10l5 7m0-7l-5 7" stroke="#fff" strokeWidth="1.800" />
    </>
  ),
  powerBi: (
    <>
      <rect x="14" y="2" width="8" height="24" rx="1" fill="#dba50f" />
      <path d="M9 9q0-1 1-1h7q1 0 1 1v17H9z" fill="#f2c52c" />
      <path d="M4 15q0-1 1-1h6q2 0 2 2v10H5q-1 0-1-1z" fill="#fbe48a" />
    </>
  ),
};

const apps: [string, ReactNode, boolean][] = [
  ["Task view", app.task, false],
  ["Widgets", app.widgets, false],
  ["Chat", app.chat, false],
  ["Edge", app.edge, false],
  ["File Explorer", app.folder, true],
  ["Microsoft Store", app.store, false],
  ["Chrome", app.chrome, true],
  ["SQL Server Management Studio", app.ssms, true],
  ["Excel", app.excel, true],
];

function Pharaoh() {
  return (
    <svg width="46" height="30" viewBox="0 0 46 30" fill="none" aria-hidden="true">
      <path d="M8 28Q5 22 7 14 10 1.500 20.500 1.500T34 14q2 8-1 14z" fill="#256b8c" />
      <path d="M11 7l6 6M16 3l3 6M30 7l-6 6M25 3l-3 6M8 12l6 3M33 12l-6 3M6.500 17l7 1M34.500 17l-7 1M6.500 21.500l8-1M34.500 21.500l-8-1M7.500 26l8-3M33.500 26l-8-3" stroke="#e8c35a" strokeWidth="1.800" />
      <path d="M14 12q6.500-4 13 0 1 8-6.500 13Q13 20 14 12z" fill="#e9bd62" />
      <path d="M13 11q7-4 15 0" stroke="#c99a3a" strokeWidth="1.500" />
      <path d="M16 14.500h3M22 14.500h3M18.500 20h4" stroke="#41423d" strokeWidth="1.300" />
      <path d="M20.500 15v3" stroke="#b98835" />
      <path d="M19.500 24h2v5h-2z" fill="#c99a3a" />
      <path d="M19.500 3h2v5h-2z" fill="#c63f38" />
      <path d="M2 14v14M2 15l7 11" stroke="#b98f56" strokeWidth="2" />
      <path d="M1 22h3v6H1z" fill="#c63f38" />
      <path d="M29 28l9-8q5-1 5-6 0-4-4-4-4 1-4 5" stroke="#d9a851" strokeWidth="2.200" />
      <path d="M29 28l9-8q5-1 5-6 0-4-4-4-4 1-4 5" stroke="#2c8fa8" strokeWidth="2.200" strokeDasharray="2 3" />
      <path d="M12 28.500h18M15 26h4M22 26h4" stroke="#e8c35a" strokeWidth="1.500" strokeDasharray="3 1" />
    </svg>
  );
}

function Taskbar() {
  return (
    <div className="flex h-[49px] shrink-0 items-center border-t border-black bg-[linear-gradient(90deg,#1c212d_0%,#1a212e_16%,#13234f_19%,#101c62_30%,#111b64_45%,#181c45_52%,#1a1c40_58%,#11215c_61%,#15224d_66%,#1b202c_71%,#1b202b_100%)] pt-0.5 text-white">
      <div className="flex-1" />
      <div className="ml-[26px] flex items-center">
        <button aria-label="Start"><Glyph size={27}>{app.windows}</Glyph></button>
        <label className="ml-3 mr-0.5 flex h-8 w-[219px] items-center gap-2.5 rounded-full bg-white/15 pl-2.5 pr-1">
          <Glyph size={16}>
            <circle cx="9" cy="7" r="5.500" stroke="#e8eaf3" strokeWidth="1.500" fill="#6470a4" />
            <path d="M5 11l-4 4" stroke="#e8eaf3" strokeWidth="1.800" />
          </Glyph>
          <input type="search" aria-label="Search the desktop" placeholder="Search" className="min-w-0 flex-1 bg-transparent text-[13px] outline-none placeholder:text-[#c9cde0]" />
          <Pharaoh />
        </label>
        {apps.map(([name, art, open]) => (
          <button key={name} aria-label={name} className="flex h-12 w-11 shrink-0 flex-col items-center justify-end">
            <Glyph size={28}>{art}</Glyph>
            <span className={`mb-1 mt-1 h-[3px] w-1.5 rounded-full ${open ? "bg-[#9aa0b0]" : ""}`} />
          </button>
        ))}
        <button aria-label="Power BI Desktop" className="ml-0.5 flex h-10 w-10 shrink-0 flex-col items-center justify-end rounded border border-white/5 bg-white/10">
          <Glyph size={28}>{app.powerBi}</Glyph>
          <span className="mt-1 h-[3px] w-4 rounded-full bg-[#4cc2ff]" />
        </button>
      </div>
      <div className="flex flex-1 items-center justify-end pr-5 text-[11px] leading-4">
        <button aria-label="Show hidden icons" className="mr-3">
          <Glyph size={14}><path d="M2 9.500l5-5 5 5" stroke="#fff" strokeWidth="1.300" /></Glyph>
        </button>
        <button aria-label="Network, volume and battery" className="flex items-center gap-2">
          <Glyph size={16}>
            <path d="M1 6.500q7-6 14 0M3 9q5-4 10 0M5.500 11.500q2.500-2 5 0" stroke="#fff" strokeWidth="1.300" />
            <circle cx="8" cy="13.500" r="1.300" fill="#fff" />
          </Glyph>
          <Glyph size={17}>
            <path d="M1 6.500h3l4-4v12l-4-4H1zM10.500 6q1.500 2.500 0 5M12.500 4q3 4.500 0 9M14.500 2.500q4 6 0 12" stroke="#fff" />
          </Glyph>
          <Glyph size={17}>
            <path d="M6.500 4.500h8v8h-9M16 7v3M1 4.500h5M2.500 2v2M4.500 2v2M1.500 5v2q0 2 2 2t2-2V5M3.500 9v3.500" stroke="#fff" strokeWidth="1.300" />
            <path d="M7 6.500h6V11H6z" fill="#fff" />
          </Glyph>
        </button>
        <button className="ml-3 text-right">
          1:01 PM<br />11/4/2024
        </button>
        <span className="ml-2 flex size-4 items-center justify-center rounded-full bg-[#4cc2ff] text-[10px] text-[#1b202b]">4</span>
      </div>
    </div>
  );
}

export default function App() {
  return (
    <div className="flex h-screen w-full flex-col overflow-hidden bg-[#f3f2f1] font-['Open_Sans','Noto_Sans',sans-serif]">
      <TitleBar />
      <Ribbon />
      <div className="flex min-h-0 flex-1">
        <Rail />
        <div className="flex min-w-0 flex-1 flex-col">
          <div className="flex min-h-0 flex-1">
            <Report />
            <aside className="flex w-[33px] shrink-0 flex-col items-center border-l border-[#a19f9d] bg-white pt-3">
              <button aria-label="Expand filters"><DoubleChevron /></button>
              <h2 className="mt-3.5 flex items-center gap-2 text-[14px] font-semibold leading-5 text-[#252423] [writing-mode:vertical-rl]">
                <Glyph size={14}><path d="M13.500 1.500v11L7.500 8.500v1H2.500v-4h5z" stroke="#252423" strokeWidth="1.200" /></Glyph>
                Filters
              </h2>
            </aside>
          </div>
          <PageTabs />
        </div>
        <VisualPane />
        <aside className="flex w-[34px] shrink-0 flex-col items-center bg-[#f3f2f1] pt-3">
          <button aria-label="Expand data pane"><DoubleChevron /></button>
          <h2 className="mt-3.5 text-[14px] font-semibold leading-5 text-[#252423] [writing-mode:vertical-rl]">Data</h2>
        </aside>
      </div>
      <StatusBar />
      <Taskbar />
    </div>
  );
}
